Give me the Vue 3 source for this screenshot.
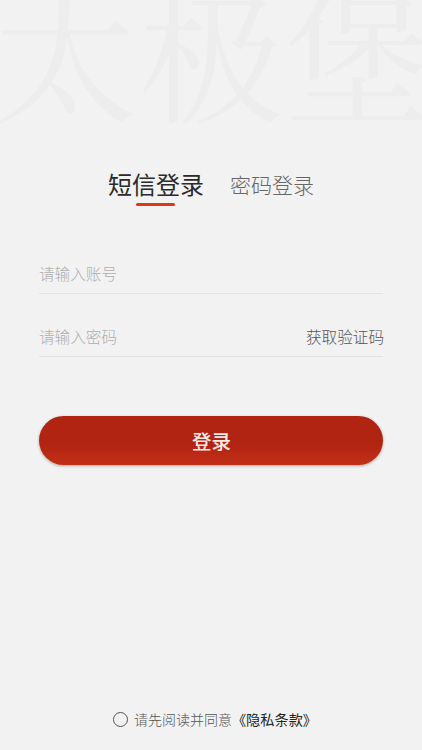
<template>
  <div class="login">
    <div class="watermark">太极堡</div>
    <div class="tabs">
      <div class="tab" :class="{active: type === 'sms'}" @click="type = 'sms'">短信登录</div>
      <div class="tab" :class="{active: type === 'password'}" @click="type = 'password'">密码登录</div>
    </div>
    <div class="form">
      <div class="field">
        <input v-model="account" placeholder="请输入账号"/>
      </div>
      <div class="field">
        <input v-model="password" type="password" placeholder="请输入密码"/>
        <span class="code" v-if="type === 'sms'">获取验证码</span>
      </div>
      <button class="submit">登录</button>
    </div>
    <div class="agreement">
      <span class="radio" :class="{checked: agreed}" @click="agreed = !agreed"></span>
      <span>请先阅读并同意</span>
      <span class="policy">《隐私条款》</span>
    </div>
  </div>
</template>

<script setup>
  import {ref} from 'vue';

  const type = ref('sms');
  const account = ref('');
  const password = ref('');
  const agreed = ref(false);
</script>

<style>
  body {
    margin: 0;
    background: #F2F2F2;
  }
</style>

<style scoped>
  .login {
    position: relative;
    height: 750px;
    box-sizing: border-box;
    padding: 164px 39px 20px;
    display: flex;
    flex-direction: column;
    overflow: hidden;
    background: #F2F2F2;
    font-family: "Noto Sans CJK SC", sans-serif;
  }

  /* 背景大字 */
  .watermark {
    position: absolute;
    top: -30px;
    left: -7px;
    font-family: "Noto Serif CJK SC", "Source Han Serif SC", "Songti SC", "SimSun", "Noto Sans CJK SC", serif;
    font-size: 145px;
    line-height: 160px;
    font-weight: 400;
    letter-spacing: 1px;
    white-space: nowrap;
    color: #EDEDED;
    transform: scaleY(0.98);
    pointer-events: none;
  }

  .tabs {
    height: 40px;
    display: flex;
    justify-content: center;
    align-items: center;
    gap: 26px;
  }

  .tab {
    position: relative;
    font-size: 21px;
    line-height: 36px;
    color: #666666;
    font-weight: 300;
    cursor: pointer;
  }

  .tab.active {
    font-size: 24px;
    font-weight: 400;
    color: #2A2A2A;
  }

  .tab.active::after {
    content: "";
    position: absolute;
    left: 50%;
    bottom: -4px;
    width: 39px;
    height: 3px;
    margin-left: -20px;
    border-radius: 2px;
    background: #DE3618;
  }

  .form {
    margin-top: 47px;
  }

  .field {
    height: 42px;
    margin-bottom: 20px;
    display: flex;
    align-items: center;
    border-bottom: 1px solid #E3E3E3;
  }

  .field input {
    flex: 1;
    min-width: 0;
    padding: 1px 0 0;
    border: none;
    outline: none;
    background: none;
    font-family: inherit;
    font-size: 15.6px;
    font-weight: 300;
  }

  .field input::placeholder {
    color: #AEAEAE;
  }

  .code {
    margin-right: -1px;
    padding-top: 2px;
    font-size: 15.6px;
    font-weight: 300;
    color: #555555;
    cursor: pointer;
  }

  .submit {
    display: block;
    width: 100%;
    height: 49px;
    margin-top: 59px;
    padding: 0 0 1px 1px;
    border: none;
    border-radius: 25px;
    background: linear-gradient(#B02411 0%, #B02411 55%, #C32F18 100%);
    box-shadow: 0 1px 3px rgba(0, 0, 0, 0.3);
    color: #FBE9E6;
    font-family: inherit;
    font-size: 19.5px;
    font-weight: 500;
    cursor: pointer;
  }

  .agreement {
    margin-top: auto;
    padding-left: 8px;
    display: flex;
    justify-content: center;
    align-items: center;
    font-size: 14px;
    line-height: 22px;
    font-weight: 300;
    color: #555555;
    white-space: nowrap;
  }

  .radio {
    width: 13px;
    height: 13px;
    margin-right: 6px;
    border: 1px solid #555555;
    border-radius: 50%;
  }

  .radio.checked {
    background: #B02411;
  }

  .policy {
    font-size: 14.2px;
    font-weight: 400;
    color: #222222;
  }
</style>
